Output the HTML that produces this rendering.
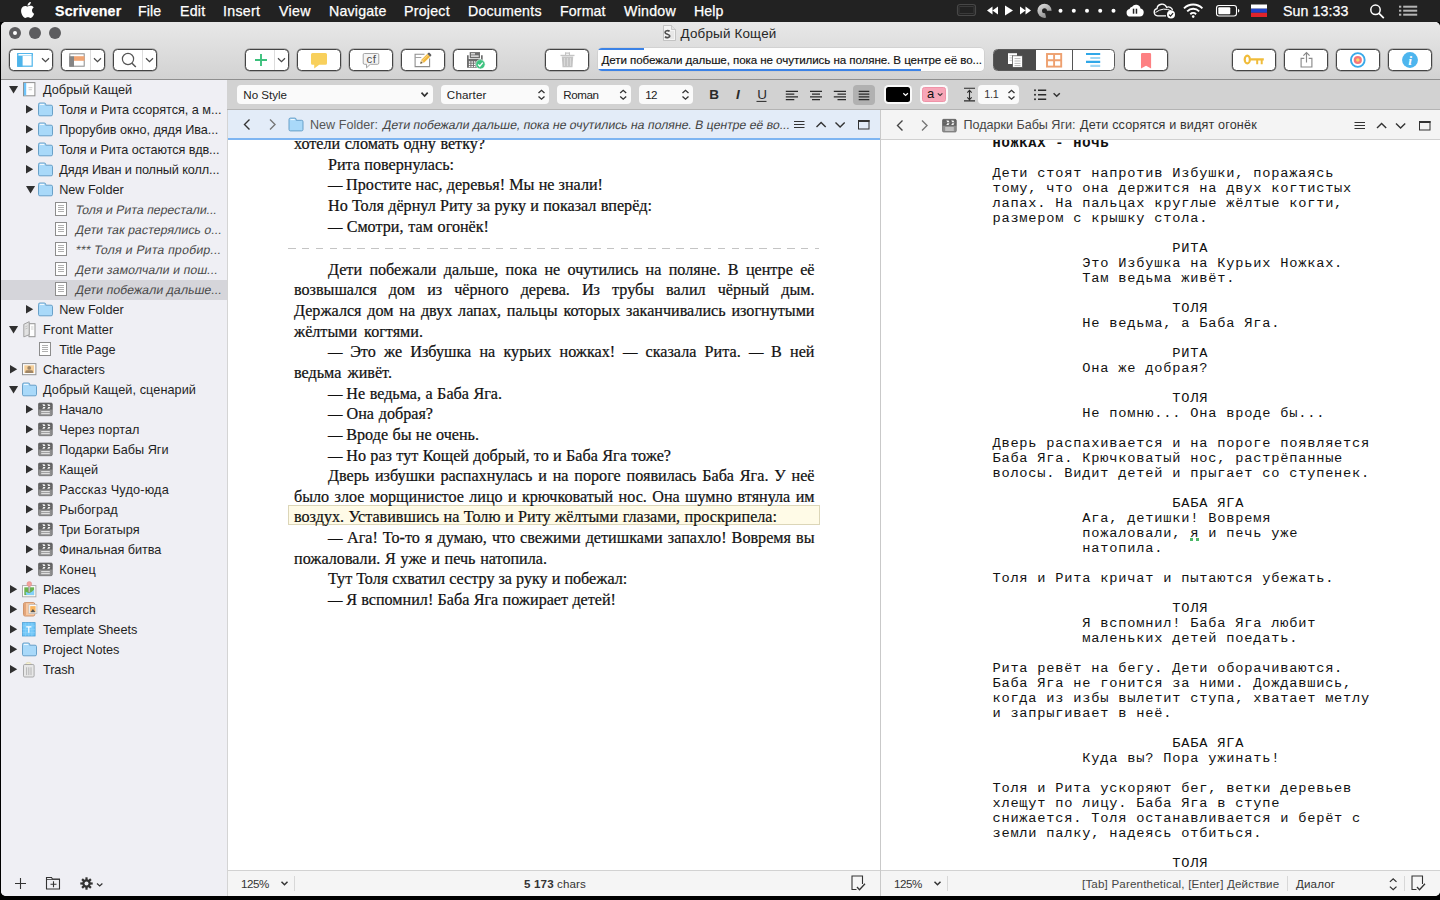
<!DOCTYPE html>
<html lang="ru">
<head>
<meta charset="utf-8">
<title>Добрый Кощей</title>
<style>
html,body{margin:0;padding:0;background:#000;}
body{width:1440px;height:900px;position:relative;overflow:hidden;font-family:"Liberation Sans",sans-serif;color:#222;}
.abs{position:absolute;}
svg{position:absolute;overflow:visible;}
/* menubar */
#menubar{position:absolute;left:0;top:0;width:1440px;height:22px;background:#222222;color:#fff;}
#menubar .mi{position:absolute;top:0;height:22px;line-height:22px;font-size:14.2px;white-space:nowrap;color:#fff;-webkit-text-stroke:0.25px #fff;}
/* window */
#win{position:absolute;left:1px;top:22px;width:1439px;height:874px;border-radius:5px;overflow:hidden;background:#fff;}
#chrome{position:absolute;left:0;top:0;width:1439px;height:57px;background:linear-gradient(#e9e9e9 0px,#e4e4e4 10px,#d2d2d2 57px);}
#chromeline{position:absolute;left:0;top:57px;width:1439px;height:1px;background:#8f8f8f;}
.tl{position:absolute;width:12px;height:12px;border-radius:6px;background:#5d5d5f;top:5px;}
.tbtn{position:absolute;top:27px;height:22px;box-sizing:border-box;border:1px solid #444;border-radius:4.5px;background:#fff;box-shadow:0 0 0 0.400px rgba(70,70,70,0.550);}
#title{position:absolute;top:3.500px;left:680px;font-size:13.400px;line-height:16px;color:#262626;white-space:nowrap;}
/* sidebar */
#side{position:absolute;left:0;top:58px;width:226px;height:816px;background:#efeff4;}
.row{position:absolute;left:0;width:226px;height:20px;line-height:20px;font-size:12.7px;color:#1f1f1f;white-space:nowrap;}
.row .t{position:absolute;top:0;}
.row.it .t{display:inline-block;transform:skewX(-11deg);transform-origin:0 70%;color:#4a4a4a;font-size:12.3px;}
.row.sel{background:#d5d5da;}
/* format bar */
#fbar{position:absolute;left:226px;top:58px;width:1213px;height:30px;background:#d2d2d2;}
#fbarline{position:absolute;left:226px;top:87px;width:1213px;height:1px;background:#b4b4b4;}
.dd{position:absolute;top:5px;height:19px;border-radius:4px;background:#fafafa;font-size:11.6px;line-height:19px;color:#222;white-space:nowrap;}
.dd span{position:absolute;left:7px;top:0;}
/* headers */
#lhead{position:absolute;left:227px;top:88px;width:652px;height:28px;background:#e3ecf8;border-bottom:2px solid #7db5f2;font-size:12.6px;line-height:27px;color:#555;white-space:nowrap;}
#rhead{position:absolute;left:880px;top:88px;width:559px;height:29px;background:#f4f4f4;border-bottom:1px solid #d0d0d0;font-size:12.6px;line-height:29px;color:#444;white-space:nowrap;}
#vdiv{position:absolute;left:879px;top:88px;width:1px;height:786px;background:#c9c9c9;}
#sdiv{position:absolute;left:226px;top:88px;width:1px;height:786px;background:#d4d4d4;}
/* editors */
#led{position:absolute;left:227px;top:118px;width:652px;height:730px;background:#fff;overflow:hidden;font-family:"Liberation Serif",serif;font-size:16.15px;color:#111;}
.em{display:inline-block;width:13.900px;transform:scaleX(0.897);transform-origin:0 50%;}
.ll{-webkit-text-stroke:0.220px #111;position:absolute;height:20.65px;line-height:20.65px;white-space:nowrap;text-align:justify;text-align-last:justify;}
#red{position:absolute;left:880px;top:118px;width:559px;height:730px;background:#fff;overflow:hidden;}
#red pre{position:absolute;margin:0;left:111.400px;top:-3.660px;font-family:"Liberation Mono",monospace;font-size:13.700px;letter-spacing:0.779px;line-height:15px;color:#111;}
.gu{text-decoration:underline dotted #4bb868;text-decoration-thickness:2.6px;text-underline-offset:1.2px;text-decoration-skip-ink:none;}
/* footers */
.foot{position:absolute;top:848px;height:26px;background:#f5f5f5;border-top:1px solid #d2d2d2;box-sizing:border-box;font-size:11.6px;line-height:26px;color:#333;white-space:nowrap;}
.fsep{position:absolute;top:5px;width:1px;height:15px;background:#d8d8d8;}
#m0{letter-spacing:0.190px;left:54.05px;}
#m1{letter-spacing:0.056px;left:139.05px;}
#m2{letter-spacing:0.237px;left:180.05px;}
#m3{letter-spacing:0.286px;left:223.25px;}
#m4{letter-spacing:0.350px;left:279.05px;}
#m5{letter-spacing:0.200px;left:329.05px;}
#m6{letter-spacing:0.249px;left:404.05px;}
#m7{letter-spacing:0.215px;left:468.25px;}
#m8{letter-spacing:0.127px;left:560.25px;}
#m9{letter-spacing:0.239px;left:624.05px;}
#m10{letter-spacing:0.103px;left:694.05px;}
#clock{letter-spacing:0.100px;left:1282.85px;}
#title{letter-spacing:0.187px;left:679.55px;}
#qs{letter-spacing:-0.084px;left:2.35px;}
#dd0{letter-spacing:-0.041px;left:6.35px;}
#dd1{letter-spacing:0.161px;left:5.85px;}
#dd2{letter-spacing:-0.415px;left:6.25px;}
#dd3{letter-spacing:-0.853px;left:6.35px;}
#lha{letter-spacing:0.001px;left:81.95px;}
#lhb{letter-spacing:-0.039px;left:153.55px;}
#rha{letter-spacing:-0.026px;left:82.05px;}
#rhb{letter-spacing:0.151px;left:198.95px;}
#z1{letter-spacing:-0.439px;left:12.85px;}
#z2{letter-spacing:-0.439px;left:12.85px;}
#ch1{letter-spacing:0.157px;left:296.25px;}
#ch2{letter-spacing:0.128px;left:329.25px;}
#hint{letter-spacing:0.175px;left:201.55px;}
#dlg{letter-spacing:0.140px;left:414.65px;}
#r0{letter-spacing:0.039px;left:41.55px;}
#r1{letter-spacing:-0.033px;left:57.76px;}
#r2{letter-spacing:-0.050px;left:57.76px;}
#r3{letter-spacing:-0.098px;left:57.76px;}
#r4{letter-spacing:-0.101px;left:57.76px;}
#r5{letter-spacing:-0.047px;left:57.76px;}
#r6{letter-spacing:-0.006px;left:74.15px;}
#r7{letter-spacing:0.071px;left:73.85px;}
#r8{letter-spacing:0.204px;left:74.35px;}
#r9{letter-spacing:0.109px;left:73.85px;}
#r10{letter-spacing:0.058px;left:73.85px;}
#r11{letter-spacing:-0.047px;left:57.76px;}
#r12{letter-spacing:0.101px;left:41.75px;}
#r13{letter-spacing:-0.026px;left:57.76px;}
#r14{letter-spacing:-0.036px;left:41.75px;}
#r15{letter-spacing:0.063px;left:41.75px;}
#r16{letter-spacing:-0.103px;left:57.76px;}
#r17{letter-spacing:0.072px;left:57.76px;}
#r18{letter-spacing:-0.028px;left:57.76px;}
#r19{letter-spacing:-0.018px;left:57.76px;}
#r20{letter-spacing:0.197px;left:57.76px;}
#r21{letter-spacing:0.067px;left:57.76px;}
#r22{letter-spacing:0.039px;left:57.76px;}
#r23{letter-spacing:-0.073px;left:57.76px;}
#r24{letter-spacing:0.204px;left:57.76px;}
#r25{letter-spacing:-0.182px;left:42.05px;}
#r26{letter-spacing:-0.227px;left:42.05px;}
#r27{letter-spacing:-0.014px;left:42.05px;}
#r28{letter-spacing:0.026px;left:42.05px;}
#r29{letter-spacing:-0.094px;left:42.05px;}
</style>
</head>
<body>
<div id="menubar">
<svg style="left:21px;top:2px" width="13.5" height="16" viewBox="2.4 0 19.6 24"><path fill="#fff" d="M12.152 6.896c-.948 0-2.415-1.078-3.96-1.04-2.04.027-3.91 1.183-4.961 3.014-2.117 3.675-.546 9.103 1.519 12.09 1.013 1.454 2.208 3.09 3.792 3.039 1.52-.065 2.09-.987 3.935-.987 1.831 0 2.35.987 3.96.948 1.637-.026 2.676-1.48 3.676-2.948 1.156-1.688 1.636-3.325 1.662-3.415-.039-.013-3.182-1.221-3.22-4.857-.026-3.04 2.48-4.494 2.597-4.559-1.429-2.09-3.623-2.324-4.39-2.376-2-.156-3.675 1.09-4.61 1.09zM15.53 3.83c.843-1.012 1.4-2.427 1.245-3.83-1.207.052-2.662.805-3.532 1.818-.78.896-1.454 2.338-1.273 3.714 1.338.104 2.715-.688 3.559-1.701"/></svg>
<div class="mi" id="m0" style="left:55px;font-weight:bold;">Scrivener</div>
<div class="mi" id="m1" style="left:138px;">File</div>
<div class="mi" id="m2" style="left:180px;">Edit</div>
<div class="mi" id="m3" style="left:223px;">Insert</div>
<div class="mi" id="m4" style="left:279px;">View</div>
<div class="mi" id="m5" style="left:329px;">Navigate</div>
<div class="mi" id="m6" style="left:404px;">Project</div>
<div class="mi" id="m7" style="left:468px;">Documents</div>
<div class="mi" id="m8" style="left:560px;">Format</div>
<div class="mi" id="m9" style="left:624px;">Window</div>
<div class="mi" id="m10" style="left:694px;">Help</div>
<!-- status icons -->
<svg style="left:0;top:0" width="1440" height="22" viewBox="0 0 1440 22">
 <rect x="957.5" y="4.5" width="18" height="11" rx="2.5" fill="none" stroke="#474747" stroke-width="1.2"/>
 <rect x="959" y="6.5" width="15" height="7" rx="1" fill="none" stroke="#3a3a3a" stroke-width="1"/>
 <g fill="#fff">
  <path d="M992.5 6.5v8l-5.5-4zM998 6.5v8l-5.5-4z"/>
  <path d="M1005 5.5v10l8-5z"/>
  <path d="M1020 6.500v8l5.500-4zM1025.500 6.500v8l5.500-4z"/>
 </g>
 <defs><linearGradient id="pg" x1="0" y1="0" x2="0.600" y2="1"><stop offset="0" stop-color="#e6e6e6"/><stop offset="1" stop-color="#8c8c8c"/></linearGradient></defs><circle cx="1044.500" cy="10.800" r="7.100" fill="url(#pg)"/>
 <path d="M1044.500 10.800 L1052.200 10.800 A7.500 7.500 0 0 1 1046.300 18.200 Z" fill="#222"/>
 <circle cx="1044.500" cy="10.800" r="2.500" fill="#222"/>
 <g fill="#fff"><circle cx="1060.500" cy="10.800" r="2"/><circle cx="1073.800" cy="10.800" r="2"/><circle cx="1087" cy="10.800" r="2"/><circle cx="1100.200" cy="10.800" r="2"/><circle cx="1113.500" cy="10.800" r="2"/></g>
 <!-- cloud pause -->
 <path fill="#fff" d="M1130.300 16.600a3.800 3.800 0 0 1 -.800 -7.500 3.300 3.300 0 0 1 2.600 -2.300 4.600 4.600 0 0 1 8.400 1.700 4.100 4.100 0 0 1 -.700 8.100z"/>
 <rect x="1132.800" y="8.700" width="1.500" height="5" fill="#222"/><rect x="1135.700" y="8.700" width="1.500" height="5" fill="#222"/>
 <!-- cloud check -->
 <path fill="none" stroke="#fff" stroke-width="1.300" d="M1166 15.800h-8.500a3.600 3.600 0 0 1 -.500 -7.100 5 5 0 0 1 9.600 -1.400 4.300 4.300 0 0 1 6 3"/>
 <path fill="none" stroke="#fff" stroke-width="1" d="M1155.500 12.500q8 -6 16 -1.500"/>
 <circle cx="1171" cy="14.500" r="4" fill="#fff"/><path d="M1169 14.600l1.500 1.500 2.600-3" stroke="#222" stroke-width="1.200" fill="none"/>
 <!-- wifi -->
 <g fill="none" stroke="#fff" stroke-width="1.900" stroke-linecap="butt">
  <path d="M1184 8.300a13 13 0 0 1 18.400 0"/>
  <path d="M1187.200 11.300a8.500 8.500 0 0 1 12 0"/>
  <path d="M1190.300 14.200a4.200 4.200 0 0 1 5.800 0"/>
 </g>
 <circle cx="1193.200" cy="16.600" r="1.300" fill="#fff"/>
 <!-- battery -->
 <rect x="1216.500" y="5.500" width="20" height="10.500" rx="2.500" fill="none" stroke="#fff" stroke-width="1.100"/>
 <rect x="1218.300" y="7.300" width="12" height="6.900" rx="1" fill="#fff"/>
 <path d="M1238 9v3.500a1.800 1.800 0 0 0 0-3.500z" fill="#fff"/>
 <!-- flag -->
 <rect x="1251" y="4.500" width="16" height="4.200" fill="#fff"/><rect x="1251" y="8.700" width="16" height="4.100" fill="#2142c7"/><rect x="1251" y="12.800" width="16" height="4.200" fill="#e0242b"/>
 <!-- search -->
 <circle cx="1375.500" cy="9.800" r="4.700" fill="none" stroke="#fff" stroke-width="1.500"/><path d="M1379 13.300l4.800 4.800" stroke="#fff" stroke-width="1.700"/>
 <!-- list -->
 <g fill="#b5b5b5"><rect x="1399" y="5.700" width="2.300" height="2"/><rect x="1399" y="9.700" width="2.300" height="2"/><rect x="1399" y="13.700" width="2.300" height="2"/>
 <rect x="1403.200" y="5.700" width="14" height="2"/><rect x="1403.200" y="9.700" width="14" height="2"/><rect x="1403.200" y="13.700" width="14" height="2"/></g>
</svg>
<div class="mi" id="clock" style="left:1283px;">Sun 13:33</div>
</div>
<div id="win">
<div id="chrome">
 <div class="tl" style="left:8px;"></div><div class="abs" style="left:12px;top:9px;width:4px;height:4px;border-radius:2px;background:#fff;"></div>
 <div class="tl" style="left:28px;"></div>
 <div class="tl" style="left:48px;"></div>
 <!-- title -->
 <svg style="left:662px;top:3px" width="13" height="16" viewBox="0 0 13 16">
  <path d="M0.500 0.500h8l4 4v11h-12z" fill="#f4f4f4" stroke="#b9b9b9" stroke-width="0.800"/>
  <path d="M8.500 0.500v4h4" fill="#e2e2e2" stroke="#b9b9b9" stroke-width="0.700"/>
  <g stroke="#cfcfcf" stroke-width="0.700"><path d="M7 7h4M7 9h4M7 11h4M7 13h4M2 13.500h4"/></g>
  <path d="M6.600 6.200c-1.500-.9-4.500-.6-4.500 1.200 0 2.200 4.700 1.500 4.700 3.700 0 1.600-3 1.900-4.900.7" fill="none" stroke="#505050" stroke-width="1.700"/>
 </svg>
 <div id="title">Добрый Кощей</div>
 <!-- toolbar buttons -->
 <div class="tbtn" style="left:8px;width:44px;"></div>
 <div class="tbtn" style="left:60px;width:44px;"></div>
 <div class="tbtn" style="left:112px;width:44px;"></div>
 <div class="tbtn" style="left:244px;width:44px;"></div>
 <div class="tbtn" style="left:296px;width:44px;"></div>
 <div class="tbtn" style="left:348px;width:44px;"></div>
 <div class="tbtn" style="left:400px;width:44px;"></div>
 <div class="tbtn" style="left:452px;width:44px;"></div>
 <div class="tbtn" style="left:544px;width:44px;"></div>
 <div class="tbtn" style="left:1123px;width:44px;"></div>
 <div class="tbtn" style="left:1231px;width:44px;"></div>
 <div class="tbtn" style="left:1283px;width:44px;"></div>
 <div class="tbtn" style="left:1335px;width:44px;"></div>
 <div class="tbtn" style="left:1387px;width:44px;"></div>
 <!-- quick search field -->
 <div class="abs" style="left:597px;top:26px;width:386px;height:23px;border-radius:4px;background:#fdfdfd;overflow:hidden;box-shadow:0 0 0 0.500px #c6c6c6;">
   <div class="abs" style="left:0;top:0;width:46px;height:2px;background:#3b82e6;"></div>
   <div class="abs" style="left:0;bottom:0;width:323px;height:2px;background:#3b82e6;"></div>
   <div class="abs" id="qs" style="-webkit-text-stroke:0.150px #111;left:3.500px;top:0;line-height:23px;font-size:11.600px;color:#111;white-space:nowrap;">Дети побежали дальше, пока не очутились на поляне. В центре её во...</div>
 </div>
 <!-- segmented -->
 <div class="abs" style="left:992px;top:27px;width:122px;height:22px;box-sizing:border-box;border:1px solid #5a5a5a;border-radius:4.500px;background:#fff;overflow:hidden;">
   <div class="abs" style="left:-1px;top:-1px;width:43px;height:22px;background:#4b4b4b;"></div>
   <div class="abs" style="left:78px;top:0;width:1px;height:20px;background:#555;"></div>
 </div>
 <!-- ICONS overlay for toolbar; coordinates are window-local (global x-1, y-22) -->
 <svg style="left:0;top:0" width="1439" height="57" viewBox="0 0 1439 57">
  <!-- btn1 sidebar icon -->
  <rect x="16.800" y="31.800" width="14.400" height="12.400" fill="#fff" stroke="#4db4ea" stroke-width="1.200"/>
  <rect x="16.200" y="34" width="5.400" height="10.800" fill="#4db4ea"/>
  <rect x="16.200" y="31.200" width="15.600" height="2.200" fill="#4db4ea"/><rect x="17.400" y="32" width="13.200" height="1" fill="#fff"/>
  <path d="M41 36.300l3.500 3.300 3.500-3.300" fill="none" stroke="#4a4a4a" stroke-width="1.250"/>
  <!-- btn2 layout icon -->
  <rect x="68.800" y="31.800" width="14.400" height="12.400" fill="#fff" stroke="#8a8a8a" stroke-width="1"/>
  <rect x="68.300" y="34.200" width="4.700" height="10.500" fill="#858585"/>
  <rect x="73" y="34.200" width="10.500" height="4.600" fill="#f0a574"/>
  <path d="M89.500 28v20" stroke="#dcdcdc" stroke-width="1"/>
  <path d="M93 36.300l3.500 3.300 3.500-3.300" fill="none" stroke="#4a4a4a" stroke-width="1.250"/>
  <!-- btn3 search -->
  <circle cx="127" cy="37" r="5.600" fill="none" stroke="#555" stroke-width="1.200"/><path d="M131 41.200l3.800 3.800" stroke="#555" stroke-width="1.500"/>
  <path d="M141.500 28v20" stroke="#dcdcdc" stroke-width="1"/>
  <path d="M145 36.300l3.500 3.300 3.500-3.300" fill="none" stroke="#4a4a4a" stroke-width="1.250"/>
  <!-- btn4 plus -->
  <path d="M254 38h12M260 32v12" stroke="#3cc07c" stroke-width="1.900"/>
  <path d="M273.500 28v20" stroke="#dcdcdc" stroke-width="1"/>
  <path d="M277 36.300l3.500 3.300 3.500-3.300" fill="none" stroke="#4a4a4a" stroke-width="1.250"/>
  <!-- btn5 comment -->
  <path d="M311.500 31h13a1.500 1.500 0 0 1 1.500 1.500v8.800a1.500 1.500 0 0 1 -1.500 1.500h-6.300l-5 3.700v-3.700h-1.700a1.500 1.500 0 0 1 -1.500-1.500v-8.800a1.500 1.500 0 0 1 1.500-1.500z" fill="#f8d05c"/>
  <!-- btn6 cf -->
  <path d="M363.500 31.500h13a1.300 1.300 0 0 1 1.300 1.300v8.200a1.300 1.300 0 0 1 -1.300 1.300h-7.200l-3.800 3.500v-3.500h-2a1.300 1.300 0 0 1 -1.300-1.300v-8.200a1.300 1.300 0 0 1 1.300-1.300z" fill="#f4f4f4" stroke="#9a9a9a" stroke-width="0.900"/>
  <text x="370.500" y="40.600" text-anchor="middle" font-family="Liberation Sans, sans-serif" font-size="11.500" letter-spacing="0.600" fill="#4f4f4f">cf</text>
  <!-- btn7 compose -->
  <path d="M423.500 32.200h-9.400v12.400h14.500v-8" fill="none" stroke="#8e8e8e" stroke-width="1.100"/>
  <path d="M414.100 35.500h6.200" stroke="#9a9a9a" stroke-width="0.900"/>
  <g transform="translate(419.200 41.700) rotate(-44.500)">
   <path d="M0 0l3.600-2h8.400v4h-8.400z" fill="#f2b73a"/>
   <path d="M3.600 -0.650h8.400" stroke="#f8d27a" stroke-width="1.100"/>
   <path d="M0 0l2.300-1.300v2.600z" fill="#5a5a5a"/>
   <path d="M3.600 -2l-1.300.7v2.600l1.300.7z" fill="#e9d4b0"/>
   <path d="M12 -2h1.300a1 1 0 0 1 1 1v2a1 1 0 0 1 -1 1h-1.300z" fill="#5e5e5e"/>
  </g>
  <!-- btn8 calc -->
  <rect x="468.700" y="30.100" width="10.300" height="6.200" fill="#6d6d6d"/><rect x="470" y="31.300" width="4" height="1.100" fill="#fff"/><rect x="470" y="33.500" width="7.700" height="1.200" fill="#fff"/>
  <path d="M466 33.300h1.700v3.700h12.300v-3.700h1.700v12.500h-15.700z" fill="#6d6d6d"/>
  <g fill="#fff"><rect x="467.900" y="39.300" width="1.500" height="1.400"/><rect x="470.400" y="39.300" width="1.500" height="1.400"/><rect x="472.900" y="39.300" width="1.500" height="1.400"/><rect x="467.900" y="41.600" width="1.500" height="1.400"/><rect x="470.400" y="41.600" width="1.500" height="1.400"/><rect x="472.900" y="41.600" width="1.500" height="1.400"/><rect x="467.900" y="43.800" width="1.500" height="1.300"/><rect x="470.400" y="43.800" width="1.500" height="1.300"/><rect x="472.900" y="43.800" width="1.500" height="1.300"/></g>
  <circle cx="479.400" cy="42.300" r="4.700" fill="#3fc380" stroke="#fff" stroke-width="0.600"/><path d="M477.100 42.400l1.700 1.700 3-3.500" fill="none" stroke="#fff" stroke-width="1.400"/>
  <!-- btn9 trash -->
  <g fill="#c4c4c4"><rect x="559.500" y="32.800" width="14" height="1.300"/><rect x="564" y="30.500" width="5" height="1.200"/><rect x="564" y="30.500" width="1.100" height="2.500"/><rect x="567.900" y="30.500" width="1.100" height="2.500"/>
  <path d="M560.800 34.500h11.400l-.7 10.800h-10z"/></g>
  <g stroke="#dedede" stroke-width="0.800"><path d="M563.500 36v8M566.500 36v8M569.500 36v8"/></g>
  <!-- segmented icons -->
  <rect x="1007" y="31.200" width="9" height="10.800" fill="#fff"/>
  <g stroke="#a9a9a9" stroke-width="0.600"><path d="M1008.500 33.500h3.500M1008.500 35.900h2.500M1008.500 38.300h2.500"/></g>
  <rect x="1011.600" y="33.800" width="9.900" height="11.500" fill="#fff" stroke="#4b4b4b" stroke-width="0.700"/>
  <g stroke="#9c9c9c" stroke-width="0.700"><path d="M1013.500 36.600h6M1013.500 39h6M1013.500 41.400h6M1013.500 43.500h6"/></g>
  <g fill="none" stroke="#eea06f" stroke-width="1.900"><rect x="1046" y="32" width="14.200" height="12.600"/><path d="M1053.100 32v12.600M1046 38.300h14.200"/></g>
  <g stroke-width="2.100"><path d="M1085 32h14.200" stroke="#2fa7e8"/><path d="M1089.300 36h9.900" stroke="#9ed6f4"/><path d="M1085 39.900h14.200" stroke="#2fa7e8"/><path d="M1089.300 43.900h9.900" stroke="#9ed6f4"/></g>
  <!-- bookmark -->
  <path d="M1140 32.300a1.300 1.300 0 0 1 1.300-1.300h7.500a1.300 1.300 0 0 1 1.300 1.300v14.100l-5.050-2.700-5.050 2.700z" fill="#fd8183"/>
  <!-- key -->
  <g fill="none" stroke="#f0bc3a"><ellipse cx="1246.300" cy="37.500" rx="2.600" ry="3.800" stroke-width="2.200"/><path d="M1249.500 37.400h13.300" stroke-width="2.300"/><path d="M1256.200 37.500v4.800M1260.700 37.500v4.800" stroke-width="2"/></g>
  <!-- share -->
  <g fill="none" stroke="#8a8a8a" stroke-width="1.150"><path d="M1303.300 36.300h-3.200v8.700h10.800v-8.700h-3.200"/><path d="M1305.500 40.500v-9.700M1302.400 33.600l3.100-3.100 3.100 3.100"/></g>
  <!-- target -->
  <circle cx="1356.800" cy="38" r="6.850" fill="#fff" stroke="#38a9e9" stroke-width="1.900"/><circle cx="1356.800" cy="38" r="4.100" fill="#f6757b"/><circle cx="1356.800" cy="38" r="1.800" fill="#f9d66b"/>
  <!-- info -->
  <circle cx="1409" cy="38" r="7.950" fill="#4db5ee"/>
  <text x="1409.100" y="42.700" text-anchor="middle" font-family="Liberation Serif, serif" font-style="italic" font-weight="bold" font-size="13.500" fill="#fff">i</text>
 </svg>
</div>
<div id="chromeline"></div>
<div id="side">
<div class="row" style="top:0px"><svg style="left:7.90px;top:6px" width="9.100" height="7.400" viewBox="0 0 9.100 7.400"><path d="M0 0h9.100l-4.550 7.400z" fill="#303030"/></svg><svg style="left:21.5px;top:2px" width="16" height="16" viewBox="0 0 16 16"><rect x="0.500" y="0.600" width="11.400" height="13.200" fill="#fefefe" stroke="#8e8e8e" stroke-width="1"/><rect x="0.900" y="1" width="2.300" height="12.400" fill="#6dc3f9"/><path d="M5.500 5.700h3.800M5.700 7.700h3.200" stroke="#b9b9b9" stroke-width="0.750"/></svg><span class="t" id="r0" style="left:42px">Добрый Кащей</span></div>
<div class="row" style="top:20px"><svg style="left:25.05px;top:5.200px" width="7.200" height="8.600" viewBox="0 0 7.200 8.600"><path d="M0 0v8.600l7.200-4.300z" fill="#303030"/></svg><svg style="left:36.5px;top:2px" width="16" height="16" viewBox="0 0 16 16"><path d="M0.500 3.900V2.400a1.400 1.400 0 0 1 1.400-1.400h4.400a1.400 1.400 0 0 1 1.400 1.400v.8h5.400a1.400 1.400 0 0 1 1.400 1.400v7.800a1.400 1.400 0 0 1 -1.400 1.400h-11.200a1.400 1.400 0 0 1 -1.400-1.400z" fill="#a9d9f9" stroke="#5e98c3" stroke-width="0.900"/><rect x="2" y="1.900" width="4.200" height="1.100" fill="#f0f9ff"/></svg><span class="t" id="r1" style="left:58.2px">Толя и Рита ссорятся, а м...</span></div>
<div class="row" style="top:40px"><svg style="left:25.05px;top:5.200px" width="7.200" height="8.600" viewBox="0 0 7.200 8.600"><path d="M0 0v8.600l7.200-4.300z" fill="#303030"/></svg><svg style="left:36.5px;top:2px" width="16" height="16" viewBox="0 0 16 16"><path d="M0.500 3.900V2.400a1.400 1.400 0 0 1 1.400-1.400h4.400a1.400 1.400 0 0 1 1.400 1.400v.8h5.400a1.400 1.400 0 0 1 1.400 1.400v7.800a1.400 1.400 0 0 1 -1.400 1.400h-11.200a1.400 1.400 0 0 1 -1.400-1.400z" fill="#a9d9f9" stroke="#5e98c3" stroke-width="0.900"/><rect x="2" y="1.900" width="4.200" height="1.100" fill="#f0f9ff"/></svg><span class="t" id="r2" style="left:58.2px">Прорубив окно, дядя Ива...</span></div>
<div class="row" style="top:60px"><svg style="left:25.05px;top:5.200px" width="7.200" height="8.600" viewBox="0 0 7.200 8.600"><path d="M0 0v8.600l7.200-4.300z" fill="#303030"/></svg><svg style="left:36.5px;top:2px" width="16" height="16" viewBox="0 0 16 16"><path d="M0.500 3.900V2.400a1.400 1.400 0 0 1 1.400-1.400h4.400a1.400 1.400 0 0 1 1.400 1.400v.8h5.400a1.400 1.400 0 0 1 1.400 1.400v7.800a1.400 1.400 0 0 1 -1.400 1.400h-11.200a1.400 1.400 0 0 1 -1.400-1.400z" fill="#a9d9f9" stroke="#5e98c3" stroke-width="0.900"/><rect x="2" y="1.900" width="4.200" height="1.100" fill="#f0f9ff"/></svg><span class="t" id="r3" style="left:58.2px">Толя и Рита остаются вдв...</span></div>
<div class="row" style="top:80px"><svg style="left:25.05px;top:5.200px" width="7.200" height="8.600" viewBox="0 0 7.200 8.600"><path d="M0 0v8.600l7.200-4.300z" fill="#303030"/></svg><svg style="left:36.5px;top:2px" width="16" height="16" viewBox="0 0 16 16"><path d="M0.500 3.900V2.400a1.400 1.400 0 0 1 1.400-1.400h4.400a1.400 1.400 0 0 1 1.400 1.400v.8h5.400a1.400 1.400 0 0 1 1.400 1.400v7.800a1.400 1.400 0 0 1 -1.400 1.400h-11.200a1.400 1.400 0 0 1 -1.400-1.400z" fill="#a9d9f9" stroke="#5e98c3" stroke-width="0.900"/><rect x="2" y="1.900" width="4.200" height="1.100" fill="#f0f9ff"/></svg><span class="t" id="r4" style="left:58.2px">Дядя Иван и полный колл...</span></div>
<div class="row" style="top:100px"><svg style="left:25.05px;top:6px" width="9.100" height="7.400" viewBox="0 0 9.100 7.400"><path d="M0 0h9.100l-4.550 7.400z" fill="#303030"/></svg><svg style="left:36.5px;top:2px" width="16" height="16" viewBox="0 0 16 16"><path d="M0.500 3.900V2.400a1.400 1.400 0 0 1 1.400-1.400h4.400a1.400 1.400 0 0 1 1.400 1.400v.8h5.400a1.400 1.400 0 0 1 1.400 1.400v7.800a1.400 1.400 0 0 1 -1.400 1.400h-11.200a1.400 1.400 0 0 1 -1.400-1.400z" fill="#a9d9f9" stroke="#5e98c3" stroke-width="0.900"/><rect x="2" y="1.900" width="4.200" height="1.100" fill="#f0f9ff"/></svg><span class="t" id="r5" style="left:58.2px">New Folder</span></div>
<div class="row it" style="top:120px"><svg style="left:54.0px;top:2px" width="16" height="16" viewBox="0 0 16 16"><rect x="0.500" y="0.500" width="11" height="13" fill="#fefefe" stroke="#8c8c8c" stroke-width="1"/><path d="M3 3.500h6M3 5.500h6M3 7.500h6M3 9.500h6" stroke="#b0b0b0" stroke-width="1"/></svg><span class="t" id="r6" style="left:74.3px">Толя и Рита перестали...</span></div>
<div class="row it" style="top:140px"><svg style="left:54.0px;top:2px" width="16" height="16" viewBox="0 0 16 16"><rect x="0.500" y="0.500" width="11" height="13" fill="#fefefe" stroke="#8c8c8c" stroke-width="1"/><path d="M3 3.500h6M3 5.500h6M3 7.500h6M3 9.500h6" stroke="#b0b0b0" stroke-width="1"/></svg><span class="t" id="r7" style="left:74.3px">Дети так растерялись о...</span></div>
<div class="row it" style="top:160px"><svg style="left:54.0px;top:2px" width="16" height="16" viewBox="0 0 16 16"><rect x="0.500" y="0.500" width="11" height="13" fill="#fefefe" stroke="#8c8c8c" stroke-width="1"/><path d="M3 3.500h6M3 5.500h6M3 7.500h6M3 9.500h6" stroke="#b0b0b0" stroke-width="1"/></svg><span class="t" id="r8" style="left:74.3px">*** Толя и Рита пробир...</span></div>
<div class="row it" style="top:180px"><svg style="left:54.0px;top:2px" width="16" height="16" viewBox="0 0 16 16"><rect x="0.500" y="0.500" width="11" height="13" fill="#fefefe" stroke="#8c8c8c" stroke-width="1"/><path d="M3 3.500h6M3 5.500h6M3 7.500h6M3 9.500h6" stroke="#b0b0b0" stroke-width="1"/></svg><span class="t" id="r9" style="left:74.3px">Дети замолчали и пош...</span></div>
<div class="row it sel" style="top:200px"><svg style="left:54.0px;top:2px" width="16" height="16" viewBox="0 0 16 16"><rect x="0.500" y="0.500" width="11" height="13" fill="#fefefe" stroke="#8c8c8c" stroke-width="1"/><path d="M3 3.500h6M3 5.500h6M3 7.500h6M3 9.500h6" stroke="#b0b0b0" stroke-width="1"/></svg><span class="t" id="r10" style="left:74.3px">Дети побежали дальше...</span></div>
<div class="row" style="top:220px"><svg style="left:25.05px;top:5.200px" width="7.200" height="8.600" viewBox="0 0 7.200 8.600"><path d="M0 0v8.600l7.200-4.300z" fill="#303030"/></svg><svg style="left:36.5px;top:2px" width="16" height="16" viewBox="0 0 16 16"><path d="M0.500 3.900V2.400a1.400 1.400 0 0 1 1.400-1.400h4.400a1.400 1.400 0 0 1 1.400 1.400v.8h5.400a1.400 1.400 0 0 1 1.400 1.400v7.800a1.400 1.400 0 0 1 -1.400 1.400h-11.200a1.400 1.400 0 0 1 -1.400-1.400z" fill="#a9d9f9" stroke="#5e98c3" stroke-width="0.900"/><rect x="2" y="1.900" width="4.200" height="1.100" fill="#f0f9ff"/></svg><span class="t" id="r11" style="left:58.2px">New Folder</span></div>
<div class="row" style="top:240px"><svg style="left:7.90px;top:6px" width="9.100" height="7.400" viewBox="0 0 9.100 7.400"><path d="M0 0h9.100l-4.550 7.400z" fill="#303030"/></svg><svg style="left:21.5px;top:2px" width="16" height="16" viewBox="0 0 16 16"><rect x="6" y="1.700" width="6" height="13" fill="#fefefe" stroke="#939393" stroke-width="1"/><path d="M8 5h2.500M8 7h2.500" stroke="#bdbdbd" stroke-width="0.700"/><path d="M0.800 2.300l5.400-2.600v13l-5.400 2.200z" fill="#e2e2e2" stroke="#9a9a9a" stroke-width="0.900"/><path d="M2.300 4.800l2.400-1M2.300 7l2.400-1" stroke="#b5b5b5" stroke-width="0.700"/></svg><span class="t" id="r12" style="left:42px">Front Matter</span></div>
<div class="row" style="top:260px"><svg style="left:38.0px;top:2px" width="16" height="16" viewBox="0 0 16 16"><rect x="0.500" y="0.500" width="11" height="13" fill="#fefefe" stroke="#8c8c8c" stroke-width="1"/><path d="M3 3.500h6M3 5.500h6M3 7.500h6M3 9.500h6" stroke="#b0b0b0" stroke-width="1"/></svg><span class="t" id="r13" style="left:58.2px">Title Page</span></div>
<div class="row" style="top:280px"><svg style="left:9.00px;top:5.200px" width="7.200" height="8.600" viewBox="0 0 7.200 8.600"><path d="M0 0v8.600l7.200-4.300z" fill="#303030"/></svg><svg style="left:20.6px;top:2px" width="16" height="16" viewBox="0 0 16 16"><rect x="0.500" y="1.600" width="13.400" height="11.100" fill="#fdfdfd" stroke="#929292" stroke-width="1"/><rect x="2.300" y="3.300" width="9.800" height="7.700" fill="#f6cf99"/><circle cx="7.200" cy="5.900" r="1.900" fill="#9f8566"/><path d="M3.300 11v-1.300q0-1.400 2-1.400h3.800q2 0 2 1.400v1.300z" fill="#9f8566"/></svg><span class="t" id="r14" style="left:42px">Characters</span></div>
<div class="row" style="top:300px"><svg style="left:7.90px;top:6px" width="9.100" height="7.400" viewBox="0 0 9.100 7.400"><path d="M0 0h9.100l-4.550 7.400z" fill="#303030"/></svg><svg style="left:20.6px;top:2px" width="16" height="16" viewBox="0 0 16 16"><path d="M0.500 3.900V2.400a1.400 1.400 0 0 1 1.400-1.400h4.400a1.400 1.400 0 0 1 1.400 1.400v.8h5.400a1.400 1.400 0 0 1 1.400 1.400v7.800a1.400 1.400 0 0 1 -1.400 1.400h-11.200a1.400 1.400 0 0 1 -1.400-1.400z" fill="#a9d9f9" stroke="#5e98c3" stroke-width="0.900"/><rect x="2" y="1.900" width="4.200" height="1.100" fill="#f0f9ff"/></svg><span class="t" id="r15" style="left:42px">Добрый Кащей, сценарий</span></div>
<div class="row" style="top:320px"><svg style="left:25.05px;top:5.200px" width="7.200" height="8.600" viewBox="0 0 7.200 8.600"><path d="M0 0v8.600l7.200-4.300z" fill="#303030"/></svg><svg style="left:36.5px;top:2px" width="16" height="16" viewBox="0 0 16 16"><rect x="0.500" y="1" width="13.800" height="12.700" rx="1.200" fill="#8f8f8f"/><path d="M0.500 7.500V2.200a1.200 1.200 0 0 1 1.200-1.200h11.400a1.200 1.200 0 0 1 1.200 1.200v5.300z" fill="#626262"/><path d="M0.500 4.300h13.800" stroke="#7a7a7a" stroke-width="0.500"/><g fill="#f4f4f4"><path d="M4.300 2.300h2.200l1 1.600h-2.200zM9.200 2.300h2.200l1 1.600h-2.200zM5.300 5h2.200l-1 1.700h-2.200zM10.200 5h2.200l-1 1.700h-2.200z"/></g><path d="M3.200 9.700h8.600M3.200 11.700h8.600" stroke="#f0f0f0" stroke-width="1"/><rect x="0.500" y="1" width="13.800" height="12.700" rx="1.200" fill="none" stroke="#6a6a6a" stroke-width="0.700"/></svg><span class="t" id="r16" style="left:58.2px">Начало</span></div>
<div class="row" style="top:340px"><svg style="left:25.05px;top:5.200px" width="7.200" height="8.600" viewBox="0 0 7.200 8.600"><path d="M0 0v8.600l7.200-4.300z" fill="#303030"/></svg><svg style="left:36.5px;top:2px" width="16" height="16" viewBox="0 0 16 16"><rect x="0.500" y="1" width="13.800" height="12.700" rx="1.200" fill="#8f8f8f"/><path d="M0.500 7.500V2.200a1.200 1.200 0 0 1 1.200-1.200h11.400a1.200 1.200 0 0 1 1.200 1.200v5.300z" fill="#626262"/><path d="M0.500 4.300h13.800" stroke="#7a7a7a" stroke-width="0.500"/><g fill="#f4f4f4"><path d="M4.300 2.300h2.200l1 1.600h-2.200zM9.200 2.300h2.200l1 1.600h-2.200zM5.300 5h2.200l-1 1.700h-2.200zM10.200 5h2.200l-1 1.700h-2.200z"/></g><path d="M3.200 9.700h8.600M3.200 11.700h8.600" stroke="#f0f0f0" stroke-width="1"/><rect x="0.500" y="1" width="13.800" height="12.700" rx="1.200" fill="none" stroke="#6a6a6a" stroke-width="0.700"/></svg><span class="t" id="r17" style="left:58.2px">Через портал</span></div>
<div class="row" style="top:360px"><svg style="left:25.05px;top:5.200px" width="7.200" height="8.600" viewBox="0 0 7.200 8.600"><path d="M0 0v8.600l7.200-4.300z" fill="#303030"/></svg><svg style="left:36.5px;top:2px" width="16" height="16" viewBox="0 0 16 16"><rect x="0.500" y="1" width="13.800" height="12.700" rx="1.200" fill="#8f8f8f"/><path d="M0.500 7.500V2.200a1.200 1.200 0 0 1 1.200-1.200h11.400a1.200 1.200 0 0 1 1.200 1.200v5.300z" fill="#626262"/><path d="M0.500 4.300h13.800" stroke="#7a7a7a" stroke-width="0.500"/><g fill="#f4f4f4"><path d="M4.300 2.300h2.200l1 1.600h-2.200zM9.200 2.300h2.200l1 1.600h-2.200zM5.300 5h2.200l-1 1.700h-2.200zM10.200 5h2.200l-1 1.700h-2.200z"/></g><path d="M3.200 9.700h8.600M3.200 11.700h8.600" stroke="#f0f0f0" stroke-width="1"/><rect x="0.500" y="1" width="13.800" height="12.700" rx="1.200" fill="none" stroke="#6a6a6a" stroke-width="0.700"/></svg><span class="t" id="r18" style="left:58.2px">Подарки Бабы Яги</span></div>
<div class="row" style="top:380px"><svg style="left:25.05px;top:5.200px" width="7.200" height="8.600" viewBox="0 0 7.200 8.600"><path d="M0 0v8.600l7.200-4.300z" fill="#303030"/></svg><svg style="left:36.5px;top:2px" width="16" height="16" viewBox="0 0 16 16"><rect x="0.500" y="1" width="13.800" height="12.700" rx="1.200" fill="#8f8f8f"/><path d="M0.500 7.500V2.200a1.200 1.200 0 0 1 1.200-1.200h11.400a1.200 1.200 0 0 1 1.200 1.200v5.300z" fill="#626262"/><path d="M0.500 4.300h13.800" stroke="#7a7a7a" stroke-width="0.500"/><g fill="#f4f4f4"><path d="M4.300 2.300h2.200l1 1.600h-2.200zM9.200 2.300h2.200l1 1.600h-2.200zM5.300 5h2.200l-1 1.700h-2.200zM10.200 5h2.200l-1 1.700h-2.200z"/></g><path d="M3.200 9.700h8.600M3.200 11.700h8.600" stroke="#f0f0f0" stroke-width="1"/><rect x="0.500" y="1" width="13.800" height="12.700" rx="1.200" fill="none" stroke="#6a6a6a" stroke-width="0.700"/></svg><span class="t" id="r19" style="left:58.2px">Кащей</span></div>
<div class="row" style="top:400px"><svg style="left:25.05px;top:5.200px" width="7.200" height="8.600" viewBox="0 0 7.200 8.600"><path d="M0 0v8.600l7.200-4.300z" fill="#303030"/></svg><svg style="left:36.5px;top:2px" width="16" height="16" viewBox="0 0 16 16"><rect x="0.500" y="1" width="13.800" height="12.700" rx="1.200" fill="#8f8f8f"/><path d="M0.500 7.500V2.200a1.200 1.200 0 0 1 1.200-1.200h11.400a1.200 1.200 0 0 1 1.200 1.200v5.300z" fill="#626262"/><path d="M0.500 4.300h13.800" stroke="#7a7a7a" stroke-width="0.500"/><g fill="#f4f4f4"><path d="M4.300 2.300h2.200l1 1.600h-2.200zM9.200 2.300h2.200l1 1.600h-2.200zM5.300 5h2.200l-1 1.700h-2.200zM10.200 5h2.200l-1 1.700h-2.200z"/></g><path d="M3.200 9.700h8.600M3.200 11.700h8.600" stroke="#f0f0f0" stroke-width="1"/><rect x="0.500" y="1" width="13.800" height="12.700" rx="1.200" fill="none" stroke="#6a6a6a" stroke-width="0.700"/></svg><span class="t" id="r20" style="left:58.2px">Рассказ Чудо-юда</span></div>
<div class="row" style="top:420px"><svg style="left:25.05px;top:5.200px" width="7.200" height="8.600" viewBox="0 0 7.200 8.600"><path d="M0 0v8.600l7.200-4.300z" fill="#303030"/></svg><svg style="left:36.5px;top:2px" width="16" height="16" viewBox="0 0 16 16"><rect x="0.500" y="1" width="13.800" height="12.700" rx="1.200" fill="#8f8f8f"/><path d="M0.500 7.500V2.200a1.200 1.200 0 0 1 1.200-1.200h11.400a1.200 1.200 0 0 1 1.200 1.200v5.300z" fill="#626262"/><path d="M0.500 4.300h13.800" stroke="#7a7a7a" stroke-width="0.500"/><g fill="#f4f4f4"><path d="M4.300 2.300h2.200l1 1.600h-2.200zM9.200 2.300h2.200l1 1.600h-2.200zM5.300 5h2.200l-1 1.700h-2.200zM10.200 5h2.200l-1 1.700h-2.200z"/></g><path d="M3.200 9.700h8.600M3.200 11.700h8.600" stroke="#f0f0f0" stroke-width="1"/><rect x="0.500" y="1" width="13.800" height="12.700" rx="1.200" fill="none" stroke="#6a6a6a" stroke-width="0.700"/></svg><span class="t" id="r21" style="left:58.2px">Рыбоград</span></div>
<div class="row" style="top:440px"><svg style="left:25.05px;top:5.200px" width="7.200" height="8.600" viewBox="0 0 7.200 8.600"><path d="M0 0v8.600l7.200-4.300z" fill="#303030"/></svg><svg style="left:36.5px;top:2px" width="16" height="16" viewBox="0 0 16 16"><rect x="0.500" y="1" width="13.800" height="12.700" rx="1.200" fill="#8f8f8f"/><path d="M0.500 7.500V2.200a1.200 1.200 0 0 1 1.200-1.200h11.400a1.200 1.200 0 0 1 1.200 1.200v5.300z" fill="#626262"/><path d="M0.500 4.300h13.800" stroke="#7a7a7a" stroke-width="0.500"/><g fill="#f4f4f4"><path d="M4.300 2.300h2.200l1 1.600h-2.200zM9.200 2.300h2.200l1 1.600h-2.200zM5.300 5h2.200l-1 1.700h-2.200zM10.200 5h2.200l-1 1.700h-2.200z"/></g><path d="M3.200 9.700h8.600M3.200 11.700h8.600" stroke="#f0f0f0" stroke-width="1"/><rect x="0.500" y="1" width="13.800" height="12.700" rx="1.200" fill="none" stroke="#6a6a6a" stroke-width="0.700"/></svg><span class="t" id="r22" style="left:58.2px">Три Богатыря</span></div>
<div class="row" style="top:460px"><svg style="left:25.05px;top:5.200px" width="7.200" height="8.600" viewBox="0 0 7.200 8.600"><path d="M0 0v8.600l7.200-4.300z" fill="#303030"/></svg><svg style="left:36.5px;top:2px" width="16" height="16" viewBox="0 0 16 16"><rect x="0.500" y="1" width="13.800" height="12.700" rx="1.200" fill="#8f8f8f"/><path d="M0.500 7.500V2.200a1.200 1.200 0 0 1 1.200-1.200h11.400a1.200 1.200 0 0 1 1.200 1.200v5.300z" fill="#626262"/><path d="M0.500 4.300h13.800" stroke="#7a7a7a" stroke-width="0.500"/><g fill="#f4f4f4"><path d="M4.300 2.300h2.200l1 1.600h-2.200zM9.200 2.300h2.200l1 1.600h-2.200zM5.300 5h2.200l-1 1.700h-2.200zM10.200 5h2.200l-1 1.700h-2.200z"/></g><path d="M3.200 9.700h8.600M3.200 11.700h8.600" stroke="#f0f0f0" stroke-width="1"/><rect x="0.500" y="1" width="13.800" height="12.700" rx="1.200" fill="none" stroke="#6a6a6a" stroke-width="0.700"/></svg><span class="t" id="r23" style="left:58.2px">Финальная битва</span></div>
<div class="row" style="top:480px"><svg style="left:25.05px;top:5.200px" width="7.200" height="8.600" viewBox="0 0 7.200 8.600"><path d="M0 0v8.600l7.200-4.300z" fill="#303030"/></svg><svg style="left:36.5px;top:2px" width="16" height="16" viewBox="0 0 16 16"><rect x="0.500" y="1" width="13.800" height="12.700" rx="1.200" fill="#8f8f8f"/><path d="M0.500 7.500V2.200a1.200 1.200 0 0 1 1.200-1.200h11.400a1.200 1.200 0 0 1 1.200 1.200v5.300z" fill="#626262"/><path d="M0.500 4.300h13.800" stroke="#7a7a7a" stroke-width="0.500"/><g fill="#f4f4f4"><path d="M4.300 2.300h2.200l1 1.600h-2.200zM9.200 2.300h2.200l1 1.600h-2.200zM5.300 5h2.200l-1 1.700h-2.200zM10.200 5h2.200l-1 1.700h-2.200z"/></g><path d="M3.200 9.700h8.600M3.200 11.700h8.600" stroke="#f0f0f0" stroke-width="1"/><rect x="0.500" y="1" width="13.800" height="12.700" rx="1.200" fill="none" stroke="#6a6a6a" stroke-width="0.700"/></svg><span class="t" id="r24" style="left:58.2px">Конец</span></div>
<div class="row" style="top:500px"><svg style="left:9.00px;top:5.200px" width="7.200" height="8.600" viewBox="0 0 7.200 8.600"><path d="M0 0v8.600l7.200-4.300z" fill="#303030"/></svg><svg style="left:20.6px;top:2px" width="16" height="16" viewBox="0 0 16 16"><rect x="0.500" y="3.600" width="13.400" height="11.200" fill="#fdfdfd" stroke="#a6a6a6" stroke-width="0.900"/><rect x="2.300" y="5.300" width="9.800" height="7.800" fill="#6bb24f"/><path d="M12.100 7.500v5.600h-7.500a3.500 3.500 0 0 1 -.8-3.300q3.500 2.300 6.300-.3q1.200-1.100 2-2z" fill="#82d1fb"/><path d="M4.900 5.300h4.700v3.200q-2.500 1.700-4.700 0z" fill="#82d1fb" opacity="0"/><rect x="6.500" y="3" width="1.500" height="7.200" rx=".7" fill="#c9c9c9" stroke="#8d8d8d" stroke-width="0.400"/><circle cx="7.300" cy="2" r="2.400" fill="#f3a19b" stroke="#dc8a84" stroke-width="0.500"/></svg><span class="t" id="r25" style="left:42px">Places</span></div>
<div class="row" style="top:520px"><svg style="left:9.00px;top:5.200px" width="7.200" height="8.600" viewBox="0 0 7.200 8.600"><path d="M0 0v8.600l7.200-4.300z" fill="#303030"/></svg><svg style="left:21.7px;top:2px" width="16" height="16" viewBox="0 0 16 16"><rect x="0.500" y="0.600" width="11.300" height="13.400" rx="1.600" fill="#f8c8a1" stroke="#c88a5f" stroke-width="0.900"/><path d="M0.900 2.200a1.200 1.200 0 0 1 1.200-1.200h.9v12.600h-.9a1.200 1.200 0 0 1 -1.200-1.200z" fill="#e2a57b"/><rect x="5.900" y="2.700" width="8" height="8.900" fill="#fdfdfd" stroke="#b5b5b5" stroke-width="0.700"/><rect x="7.200" y="4.100" width="5.400" height="6.100" fill="#f9b55f"/><path d="M7.400 10.200l2.500-3.200 2.600 3.200z" fill="#555"/></svg><span class="t" id="r26" style="left:42px">Research</span></div>
<div class="row" style="top:540px"><svg style="left:9.00px;top:5.200px" width="7.200" height="8.600" viewBox="0 0 7.200 8.600"><path d="M0 0v8.600l7.200-4.300z" fill="#303030"/></svg><svg style="left:20.6px;top:2px" width="16" height="16" viewBox="0 0 16 16"><rect x="0.500" y="0.600" width="12.600" height="13.400" fill="#6fc6f8" stroke="#4b9fd5" stroke-width="0.800"/><path d="M0.500 3.900h12.600M0.500 7.300h12.600M0.500 10.700h12.600M3.700 0.600v13.400M6.800 0.600v13.400M9.900 0.600v13.400" stroke="#9bd9fb" stroke-width="0.500"/><path d="M4.200 4.900h5.200M6.800 4.900v5.900" stroke="#fff" stroke-width="1.200"/></svg><span class="t" id="r27" style="left:42px">Template Sheets</span></div>
<div class="row" style="top:560px"><svg style="left:9.00px;top:5.200px" width="7.200" height="8.600" viewBox="0 0 7.200 8.600"><path d="M0 0v8.600l7.200-4.300z" fill="#303030"/></svg><svg style="left:20.6px;top:2px" width="16" height="16" viewBox="0 0 16 16"><path d="M0.500 3.900V2.400a1.400 1.400 0 0 1 1.400-1.400h4.400a1.400 1.400 0 0 1 1.400 1.400v.8h5.400a1.400 1.400 0 0 1 1.400 1.400v7.800a1.400 1.400 0 0 1 -1.400 1.400h-11.200a1.400 1.400 0 0 1 -1.400-1.400z" fill="#a9d9f9" stroke="#5e98c3" stroke-width="0.900"/><rect x="2" y="1.900" width="4.200" height="1.100" fill="#f0f9ff"/></svg><span class="t" id="r28" style="left:42px">Project Notes</span></div>
<div class="row" style="top:580px"><svg style="left:9.00px;top:5.200px" width="7.200" height="8.600" viewBox="0 0 7.200 8.600"><path d="M0 0v8.600l7.200-4.300z" fill="#303030"/></svg><svg style="left:21.6px;top:2px" width="16" height="16" viewBox="0 0 16 16"><path d="M2.300 2.500q1-2.400 3-2.100q2.200-.5 3.500 2.100z" fill="#f7f1d0" stroke="#cfcaa8" stroke-width="0.500"/><rect x="0.500" y="2.500" width="10.600" height="12.500" rx="1.200" fill="#e7e7e7" stroke="#a0a0a0" stroke-width="0.900"/><path d="M3.600 5.300v7.800M5.800 5.300v7.800M8 5.300v7.800" stroke="#a9a9a9" stroke-width="0.800"/></svg><span class="t" id="r29" style="left:42px">Trash</span></div>
<svg style="left:0;top:790px" width="226" height="26" viewBox="0 0 226 26">
 <path d="M14 13.500h11M19.500 8v11" stroke="#333" stroke-width="1.100" fill="none"/>
 <path d="M45.500 9.500v-2h5l1 1.500h7v10h-13z" fill="none" stroke="#333" stroke-width="1.100"/><path d="M45.500 9.500h13" stroke="#333" stroke-width="0.800"/>
 <path d="M49.500 14.300h6M52.500 11.300v6" stroke="#333" stroke-width="1.100"/>
 <g transform="translate(85.500 13.500)" fill="#333">
  <circle r="4.200"/>
  <g><rect x="-1.100" y="-6.200" width="2.200" height="12.400"/><rect x="-1.100" y="-6.200" width="2.200" height="12.400" transform="rotate(45)"/><rect x="-1.100" y="-6.200" width="2.200" height="12.400" transform="rotate(90)"/><rect x="-1.100" y="-6.200" width="2.200" height="12.400" transform="rotate(135)"/></g>
  <circle r="2" fill="#efeff4"/>
 </g>
 <path d="M96 13.500l2.700 2.500 2.700-2.500" fill="none" stroke="#333" stroke-width="1.200"/>
</svg>
</div>
<div id="fbar">
 <div class="dd" style="left:10px;width:196px;"><span id="dd0">No Style</span></div>
 <div class="dd" style="left:214px;width:108px;"><span id="dd1">Charter</span></div>
 <div class="dd" style="left:330px;width:74px;"><span id="dd2">Roman</span></div>
 <div class="dd" style="left:412px;width:54px;"><span id="dd3">12</span></div>
 <div class="abs" style="left:481px;top:5px;width:12px;text-align:center;font-weight:bold;font-size:13.500px;line-height:19px;color:#2a2a2a;">B</div>
 <div class="abs" style="left:505px;top:5px;width:12px;text-align:center;font-weight:bold;font-style:italic;font-size:13.500px;line-height:19px;color:#2a2a2a;">I</div>
 <div class="abs" style="left:529px;top:5px;width:12px;text-align:center;font-size:13.500px;line-height:19px;color:#2a2a2a;">U</div>
 <div class="abs" style="left:626px;top:4.500px;width:22px;height:20px;border-radius:4px;background:#b1b1b1;"></div>
 <div class="abs" style="left:657px;top:5px;width:28px;height:19px;border-radius:4.500px;background:#fafafa;"></div>
 <div class="abs" style="left:659px;top:7px;width:24px;height:15px;border-radius:2.500px;background:#000;"></div>
 <div class="abs" style="left:693px;top:5px;width:28px;height:19px;border-radius:4.500px;background:#fafafa;"></div>
 <div class="abs" style="left:695px;top:7px;width:24px;height:15px;box-sizing:border-box;border:1px solid #ef93a8;border-radius:2.500px;background:#f7a6b8;"></div>
 <div class="abs" style="left:700px;top:5px;font-size:13px;line-height:17.500px;color:#111;">a</div>
 <div class="dd" style="left:751px;width:41px;"><span id="dd4" style="left:6.300px;font-size:10.800px;letter-spacing:-0.300px;color:#333;">1.1</span></div>
 <svg style="left:0;top:0" width="1213" height="29" viewBox="0 0 1213 29">
  <!-- chevrons/steppers in dropdowns -->
  <path d="M194.500 12.700l3.100 3.300 3.100-3.300" fill="none" stroke="#333" stroke-width="1.700"/>
  <g fill="none" stroke="#333" stroke-width="1.300">
   <path d="M311.5 13.100l3-2.800 3 2.800M311.5 16.400l3 2.800 3-2.800"/>
   <path d="M393.2 13.100l3-2.800 3 2.800M393.2 16.400l3 2.800 3-2.800"/>
   <path d="M455.5 13.100l3-2.800 3 2.800M455.5 16.400l3 2.800 3-2.800"/>
   <path d="M781.5 13.100l3-2.800 3 2.800M781.5 16.400l3 2.800 3-2.800"/>
  </g>
  <path d="M529.500 21.400h10" stroke="#2a2a2a" stroke-width="1"/>
  <!-- align icons -->
  <g stroke="#2b2b2b" stroke-width="1.250">
   <path d="M558.800 11.400h12.200M558.800 14.100h8.500M558.800 16.800h12.200M558.800 19.500h8.500"/>
   <path d="M583 11.400h12M585 14.100h8M583 16.800h12M585 19.500h8"/>
   <path d="M606.800 11.400h12.200M610.500 14.100h8.500M606.800 16.800h12.200M610.500 19.500h8.500"/>
   <path d="M631.700 11.400h10.600M631.700 14.100h10.600M631.700 16.800h10.600M631.700 19.500h10.600"/>
  </g>
  <path d="M676.300 13.300l2.300 2.200 2.300-2.200" fill="none" stroke="#fff" stroke-width="1.200"/>
  <path d="M710.800 13.300l2.300 2.200 2.300-2.200" fill="none" stroke="#333" stroke-width="1.100"/>
  <!-- line spacing icon -->
  <g stroke="#2b2b2b" stroke-width="1.100" fill="none"><path d="M737 8.300h11M737 20.900h11M742.500 10.300v8.600M740.300 12.600l2.200-2.200 2.200 2.200M740.300 17.400l2.200 2.200 2.200-2.200"/></g>
  <!-- list icon -->
  <g fill="#2b2b2b"><circle cx="808" cy="10.300" r="1"/><circle cx="808" cy="14.800" r="1"/><circle cx="808" cy="19.300" r="1"/></g>
  <g stroke="#2b2b2b" stroke-width="1.500"><path d="M811 10.300h8.200M811 14.800h8.200M811 19.300h8.200"/></g>
  <path d="M826.600 13.200l3.100 3 3.100-3" fill="none" stroke="#333" stroke-width="1.500"/>
 </svg>
</div>
<div id="fbarline"></div>
<div id="sdiv"></div>
<!-- left header -->
<div id="lhead">
 <svg style="left:0;top:1.300px" width="652" height="27" viewBox="0 0 652 27">
  <path d="M21.500 8.500l-5 5 5 5" fill="none" stroke="#333" stroke-width="1.400"/>
  <path d="M42 8.500l5 5-5 5" fill="none" stroke="#777" stroke-width="1.400"/>
  <g transform="translate(60.500 6.100)"><path d="M0.500 3.900V2.400a1.400 1.400 0 0 1 1.400-1.400h4.400a1.400 1.400 0 0 1 1.400 1.400v.8h5.400a1.400 1.400 0 0 1 1.400 1.400v7.800a1.400 1.400 0 0 1 -1.400 1.400h-11.200a1.400 1.400 0 0 1 -1.400-1.400z" fill="#a9d9f9" stroke="#5e98c3" stroke-width="0.900"/><rect x="2" y="1.900" width="4.200" height="1.100" fill="#f0f9ff"/></g>
  <path d="M566 10.500h10.500M566 13.500h10.500M566 16.500h10.500" stroke="#333" stroke-width="1.100"/>
  <path d="M588.500 16l4.600-4.600 4.600 4.600" fill="none" stroke="#333" stroke-width="1.400"/>
  <path d="M607.500 11.500l4.600 4.600 4.600-4.600" fill="none" stroke="#333" stroke-width="1.400"/>
  <rect x="630.500" y="9.500" width="10.500" height="8.500" fill="none" stroke="#333" stroke-width="1"/><path d="M630 10h11.500" stroke="#333" stroke-width="2"/>
 </svg>
 <span class="abs" id="lha" style="left:82px;top:1.500px;">New Folder:</span><span class="abs" id="lhb" style="left:154px;top:1.500px;display:inline-block;transform:skewX(-11deg);transform-origin:0 70%;font-size:12.300px;color:#444;">Дети побежали дальше, пока не очутились на поляне. В центре её во...</span>
</div>
<div id="vdiv"></div>
<!-- right header -->
<div id="rhead">
 <svg style="left:0;top:1px" width="559" height="29" viewBox="0 0 559 29">
  <path d="M21.500 9.500l-5 5 5 5" fill="none" stroke="#444" stroke-width="1.400"/>
  <path d="M41 9.500l5 5-5 5" fill="none" stroke="#777" stroke-width="1.400"/>
  <g transform="translate(61 7.300)"><rect x="0.500" y="1" width="13.800" height="12.700" rx="1.200" fill="#8f8f8f"/><path d="M0.500 7.500V2.200a1.200 1.200 0 0 1 1.200-1.200h11.400a1.200 1.200 0 0 1 1.200 1.200v5.300z" fill="#626262"/><path d="M0.500 4.300h13.800" stroke="#7a7a7a" stroke-width="0.500"/><g fill="#f4f4f4"><path d="M4.300 2.300h2.200l1 1.600h-2.200zM9.200 2.300h2.200l1 1.600h-2.200zM5.300 5h2.200l-1 1.700h-2.200zM10.200 5h2.200l-1 1.700h-2.200z"/></g><path d="M3.200 9.700h8.600M3.200 11.700h8.600" stroke="#f0f0f0" stroke-width="1"/><rect x="0.500" y="1" width="13.800" height="12.700" rx="1.200" fill="none" stroke="#6a6a6a" stroke-width="0.700"/></g>
  <path d="M473.500 11.500h10.500M473.500 14.500h10.500M473.500 17.500h10.500" stroke="#333" stroke-width="1.100"/>
  <path d="M496 17l4.600-4.600 4.600 4.600" fill="none" stroke="#333" stroke-width="1.400"/>
  <path d="M515 12.500l4.600 4.600 4.600-4.600" fill="none" stroke="#333" stroke-width="1.400"/>
  <rect x="538.500" y="10.500" width="10.500" height="8.500" fill="none" stroke="#333" stroke-width="1"/><path d="M538 11h11.500" stroke="#333" stroke-width="2"/>
 </svg>
 <span class="abs" id="rha" style="left:82.500px;top:1.200px;">Подарки Бабы Яги:</span><span class="abs" id="rhb" style="left:199px;top:1.200px;color:#333;">Дети ссорятся и видят огонёк</span>
</div>
<div id="led">
<div class="abs" style="left:60px;top:365.46px;width:530px;height:17.2px;background:#fffbe7;border:1px solid #dcd6b8;box-sizing:content-box;"></div>
<div class="abs" style="left:60px;top:108.10px;width:531px;height:1px;background:repeating-linear-gradient(90deg,#c4c4c4 0,#c4c4c4 7.600px,transparent 7.600px,transparent 13.860px);"></div>
<div class="ll" style="left:66px;top:-5.85px;width:191.0px;">хотели сломать одну ветку?</div>
<div class="ll" style="left:100px;top:14.78px;width:126.0px;">Рита повернулась:</div>
<div class="ll" style="left:100px;top:35.41px;width:275.0px;"><span class="em">—</span> Простите нас, деревья! Мы не знали!</div>
<div class="ll" style="left:100px;top:56.04px;width:324.0px;">Но Толя дёрнул Риту за руку и показал вперёд:</div>
<div class="ll" style="left:100px;top:76.67px;width:161.0px;"><span class="em">—</span> Смотри, там огонёк!</div>
<div class="ll" style="left:100px;top:119.85px;width:486.5px;">Дети побежали дальше, пока не очутились на поляне. В центре её</div>
<div class="ll" style="left:66px;top:140.48px;width:520.5px;">возвышался дом из чёрного дерева. Из трубы валил чёрный дым.</div>
<div class="ll" style="left:66px;top:161.11px;width:520.5px;">Держался дом на двух лапах, пальцы которых заканчивались изогнутыми</div>
<div class="ll" style="left:66px;top:181.74px;width:129.0px;">жёлтыми когтями.</div>
<div class="ll" style="left:100px;top:202.37px;width:486.5px;"><span class="em">—</span> Это же Избушка на курьих ножках! <span class="em">—</span> сказала Рита. <span class="em">—</span> В ней</div>
<div class="ll" style="left:66px;top:223.00px;width:98.0px;">ведьма живёт.</div>
<div class="ll" style="left:100px;top:243.63px;width:174.0px;"><span class="em">—</span> Не ведьма, а Баба Яга.</div>
<div class="ll" style="left:100px;top:264.26px;width:105.0px;"><span class="em">—</span> Она добрая?</div>
<div class="ll" style="left:100px;top:284.89px;width:151.0px;"><span class="em">—</span> Вроде бы не очень.</div>
<div class="ll" style="left:100px;top:305.52px;width:343.0px;"><span class="em">—</span> Но раз тут Кощей добрый, то и Баба Яга тоже?</div>
<div class="ll" style="left:100px;top:326.15px;width:486.5px;">Дверь избушки распахнулась и на пороге появилась Баба Яга. У неё</div>
<div class="ll" style="left:66px;top:346.78px;width:520.5px;">было злое морщинистое лицо и крючковатый нос. Она шумно втянула им</div>
<div class="ll" style="left:66px;top:367.41px;width:483.0px;">воздух. Уставившись на Толю и Риту жёлтыми глазами, проскрипела:</div>
<div class="ll" style="left:100px;top:388.04px;width:486.5px;"><span class="em">—</span> Ага! То-то я думаю, что свежими детишками запахло! Вовремя вы</div>
<div class="ll" style="left:66px;top:408.67px;width:253.0px;">пожаловали. Я уже и печь натопила.</div>
<div class="ll" style="left:100px;top:429.30px;width:299.0px;">Тут Толя схватил сестру за руку и побежал:</div>
<div class="ll" style="left:100px;top:449.93px;width:288.0px;"><span class="em">—</span> Я вспомнил! Баба Яга пожирает детей!</div>
</div>
<div id="red"><pre id="rpre"><b>НОЖКАХ - НОЧЬ</b>

Дети стоят напротив Избушки, поражаясь
тому, что она держится на двух когтистых
лапах. На пальцах круглые жёлтые когти,
размером с крышку стола.

                    РИТА
          Это Избушка на Курьих Ножках.
          Там ведьма живёт.

                    ТОЛЯ
          Не ведьма, а Баба Яга.

                    РИТА
          Она же добрая?

                    ТОЛЯ
          Не помню... Она вроде бы...

Дверь распахивается и на пороге появляется
Баба Яга. Крючковатый нос, растрёпанные
волосы. Видит детей и прыгает со ступенек.

                    БАБА ЯГА
          Ага, детишки! Вовремя
          пожаловали, <span class="gu">я</span> и печь уже
          натопила.

Толя и Рита кричат и пытаются убежать.

                    ТОЛЯ
          Я вспомнил! Баба Яга любит
          маленьких детей поедать.

Рита ревёт на бегу. Дети оборачиваются.
Баба Яга не гонится за ними. Дождавшись,
когда из избы вылетит ступа, хватает метлу
и запрыгивает в неё.

                    БАБА ЯГА
          Куда вы? Пора ужинать!

Толя и Рита ускоряют бег, ветки деревьев
хлещут по лицу. Баба Яга в ступе
снижается. Толя останавливается и берёт с
земли палку, надеясь отбиться.

                    ТОЛЯ</pre></div>
<div class="foot" style="left:227px;width:652px;">
 <span class="abs" id="z1" style="left:13px;top:0;">125%</span>
 <span class="abs" id="ch1" style="left:296px;top:0;font-weight:bold;">5 173</span><span class="abs" id="ch2" style="left:329px;top:0;">chars</span>
 <div class="fsep" style="left:66px;"></div>
 <svg style="left:0;top:0" width="652" height="25" viewBox="0 0 652 25">
  <path d="M53.500 10.800l3 2.900 3-2.900" fill="none" stroke="#333" stroke-width="1.500"/>
  <path d="M634.500 13v-8h-10.500v13.500h4.500" fill="none" stroke="#333" stroke-width="1.100"/><path d="M629 16l2.500 2.700 5.500-6" fill="none" stroke="#333" stroke-width="1.300"/>
 </svg>
</div>
<div class="foot" style="left:880px;width:559px;">
 <span class="abs" id="z2" style="left:13px;top:0;">125%</span>
 <span class="abs" id="hint" style="left:201px;top:0;color:#444;">[Tab] Parenthetical, [Enter] Действие</span>
 <span class="abs" id="dlg" style="left:415px;top:0;">Диалог</span>
 <div class="fsep" style="left:66px;"></div>
 <div class="fsep" style="left:406px;"></div>
 <div class="fsep" style="left:523px;"></div>
 <svg style="left:0;top:0" width="559" height="25" viewBox="0 0 559 25">
  <path d="M53.500 10.800l3 2.900 3-2.900" fill="none" stroke="#333" stroke-width="1.500"/>
  <path d="M508.900 10.900l3.300-3.100 3.300 3.100M508.900 15.600l3.300 3.100 3.300-3.100" fill="none" stroke="#333" stroke-width="1.300"/>
  <path d="M541.500 13v-8h-10.500v13.500h4.500" fill="none" stroke="#333" stroke-width="1.100"/><path d="M536 16l2.500 2.700 5.500-6" fill="none" stroke="#333" stroke-width="1.300"/>
 </svg>
</div>
</div><!-- /win -->
</body>
</html>
